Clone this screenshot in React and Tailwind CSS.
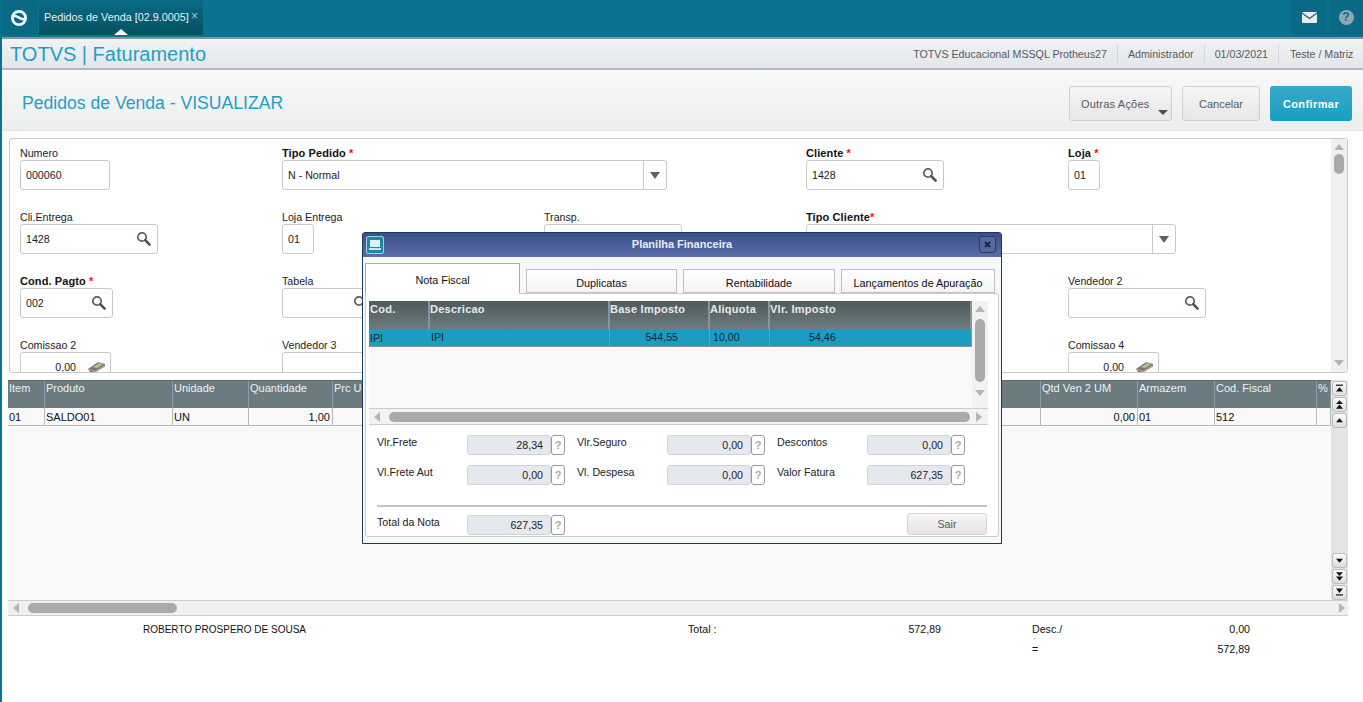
import { Fragment } from 'react'

const font = { fontFamily: '"Liberation Sans", Arial, sans-serif' }

function Lupa({ className = '' }) {
  return (
    <svg width="15" height="15" viewBox="0 0 15 15" className={className}>
      <circle cx="6" cy="6" r="4.2" fill="none" stroke="#56626a" strokeWidth="1.7" />
      <path d="M9.2 9.2L13.6 13.6" stroke="#46525a" strokeWidth="2.6" strokeLinecap="round" />
    </svg>
  )
}

function Dinheiro() {
  return (
    <svg width="19" height="13" viewBox="0 0 19 13">
      <path d="M1 9L11 2L18 4L18 6.5L8 12.5L3 12Z" fill="#86796c" />
      <path d="M6 7L12 3L16 4.3L10 8.3Z" fill="#a9c48c" />
      <path d="M2 9.5L8 11.5L18 5.5" fill="none" stroke="#b9b0a4" strokeWidth="1" />
    </svg>
  )
}

function Campo({ label, req, bold, w, icon, money, value, select, reqJunto }) {
  return (
    <div>
      <div className={`h-[14px] leading-[14px] ${bold ? 'text-[11px] tracking-[0.1px] font-bold text-[#111]' : 'text-[10.67px] text-[#222]'}`}>
        {label}
        {req && <span className="text-[#e11] font-bold">{reqJunto ? '*' : ' *'}</span>}
      </div>
      <div style={{ width: w }} className="h-[30px] bg-white border border-[#c9c9c9] rounded-[3px] flex items-center text-[10.67px] text-[#222] relative">
        <span className={`${money ? 'flex-1 text-right pr-[34px]' : 'pl-[5px]'}`}>{value}</span>
        {icon && <Lupa className="absolute right-[6px] top-[6px]" />}
        {money && <span className="absolute right-[4px] top-[7px]"><Dinheiro /></span>}
        {select && (
          <span className="absolute right-0 top-0 bottom-0 w-[23px] border-l border-[#c9c9c9] flex items-center justify-center">
            <span className="w-0 h-0 border-l-[5px] border-r-[5px] border-t-[7px] border-l-transparent border-r-transparent border-t-[#5a6268]" />
          </span>
        )}
      </div>
    </div>
  )
}

function Formulario() {
  return (
    <div className="mt-[7px] ml-[7px] mr-[15px] h-[235px] border border-[#c8c8c8] rounded-[3px] bg-white flex overflow-hidden">
      <div className="flex-1 overflow-hidden pl-[10px] pt-[7px] grid grid-cols-[262px_262px_262px_262px_1fr] auto-rows-[64px]">
        <Campo label="Numero" w={90} value="000060" />
        <div className="col-span-2"><Campo label="Tipo Pedido" req bold w={385} value="N - Normal" select /></div>
        <Campo label="Cliente" req bold w={138} value="1428" icon />
        <Campo label="Loja" req bold w={32} value="01" />

        <Campo label="Cli.Entrega" w={138} value="1428" icon />
        <Campo label="Loja Entrega" w={32} value="01" />
        <Campo label="Transp." w={138} value="" icon />
        <div className="col-span-2"><Campo label="Tipo Cliente" req reqJunto bold w={370} value="" select /></div>

        <Campo label="Cond. Pagto" req bold w={93} value="002" icon />
        <Campo label="Tabela" w={93} value="" icon />
        <div />
        <div />
        <Campo label="Vendedor 2" w={138} value="" icon />

        <Campo label="Comissao 2" w={91} value="0,00" money />
        <Campo label="Vendedor 3" w={138} value="" icon />
        <div />
        <div />
        <Campo label="Comissao 4" w={91} value="0,00" money />
      </div>
      <div className="w-[16px] bg-[#f0f0f0] flex flex-col items-center py-[3px]">
        <span className="mt-[2px] w-0 h-0 border-l-[5px] border-r-[5px] border-b-[6px] border-l-transparent border-r-transparent border-b-[#b5b5b5]" />
        <span className="mt-[4px] w-[10px] h-[20px] rounded-[5px] bg-[#aaaaaa]" />
        <span className="mt-auto mb-[3px] w-0 h-0 border-l-[5px] border-r-[5px] border-t-[6px] border-l-transparent border-r-transparent border-t-[#b5b5b5]" />
      </div>
    </div>
  )
}

const colunas = [
  { t: 'Item', w: 37, v: '01' },
  { t: 'Produto', w: 128, v: 'SALDO01' },
  { t: 'Unidade', w: 76, v: 'UN' },
  { t: 'Quantidade', w: 84, v: '1,00', dir: true },
  { t: 'Prc Unitario', w: 708, v: '' },
  { t: 'Qtd Ven 2 UM', w: 97, v: '0,00', dir: true },
  { t: 'Armazem', w: 77, v: '01' },
  { t: 'Cod. Fiscal', w: 102, v: '512' },
  { t: '%', w: 14, v: '' },
]

function BotaoSeta({ tipo }) {
  const desenhos = {
    topo: <><path d="M3.5 2h8v1.4h-8z" /><path d="M3.5 10L7.5 5L11.5 10Z" /></>,
    dupCima: <><path d="M3.5 6L7.5 1.5L11.5 6Z" /><path d="M3.5 11.5L7.5 6.5L11.5 11.5Z" /></>,
    cima: <path d="M3.5 8.5L7.5 4L11.5 8.5Z" />,
    baixo: <path d="M3.5 4.5L7.5 9L11.5 4.5Z" />,
    dupBaixo: <><path d="M3.5 1.5L7.5 6L11.5 1.5Z" /><path d="M3.5 6.5L7.5 11.5L11.5 6.5Z" /></>,
    fim: <><path d="M3.5 2L7.5 7L11.5 2Z" /><path d="M3.5 8.6h8v1.4h-8z" /></>,
  }
  return (
    <span className="w-[15px] h-[15px] bg-gradient-to-b from-[#fafafa] to-[#dddddd] border border-[#bbbbbb] rounded-[3px] flex items-center justify-center">
      <svg width="15" height="13" viewBox="0 0 15 13" fill="#111">{desenhos[tipo]}</svg>
    </span>
  )
}

function GradeItens() {
  return (
    <div className="mt-[7px] ml-[6px] mr-[15px]">
      <div className="flex h-[220px]">
        <div className="flex-1 bg-[#f9f9f9] overflow-hidden">
          <div className="flex h-[28px] bg-[#6b7b80] border-t border-[#59676c] text-[11px] leading-[14px] text-[#eef2f3]">
            {colunas.map(c => (
              <div key={c.t} style={{ width: c.w }} className="border-r border-[#8f9ca0] pl-[1px] overflow-hidden whitespace-nowrap">{c.t}</div>
            ))}
          </div>
          <div className="flex h-[18px] bg-[#f9f9f9] border-b border-[#b8b8b8] text-[11px] leading-[19px] text-[#111]">
            {colunas.map(c => (
              <div key={c.t} style={{ width: c.w }} className={`border-r border-[#b8b8b8] px-[1px] ${c.dir ? 'text-right pr-[2px]' : ''}`}>{c.v}</div>
            ))}
          </div>
        </div>
        <div className="w-[17px] bg-[#e4e4e4] flex flex-col items-center pt-[1px]">
          <BotaoSeta tipo="topo" />
          <span className="h-[1px]" />
          <BotaoSeta tipo="dupCima" />
          <span className="h-[1px]" />
          <BotaoSeta tipo="cima" />
          <span className="mt-auto" />
          <BotaoSeta tipo="baixo" />
          <span className="h-[1px]" />
          <BotaoSeta tipo="dupBaixo" />
          <span className="h-[1px]" />
          <BotaoSeta tipo="fim" />
        </div>
      </div>
      <div className="h-[16px] bg-[#f0f0f0] border-y border-[#cccccc] flex items-center relative">
        <span className="ml-[5px] w-0 h-0 border-t-[5px] border-b-[5px] border-r-[6px] border-t-transparent border-b-transparent border-r-[#b5b5b5]" />
        <span className="ml-[9px] w-[149px] h-[10px] rounded-[5px] bg-[#aaaaaa]" />
        <span className="ml-auto mr-[3px] w-0 h-0 border-t-[5px] border-b-[5px] border-l-[6px] border-t-transparent border-b-transparent border-l-[#b5b5b5]" />
      </div>
    </div>
  )
}

function Rodape() {
  return (
    <div className="mt-[6px] text-[10.67px] leading-[14px] text-[#111]">
      <div className="flex h-[20px]">
        <span className="ml-[141px] w-[545px] text-[10px] leading-[16px]">ROBERTO PROSPERO DE SOUSA</span>
        <span className="w-[200px]">Total :</span>
        <span className="w-[53px] text-right">572,89</span>
        <span className="ml-[91px] w-[60px]">
          Desc./
          <span className="block pl-[1px] text-[8px] leading-[6px]">·</span>
        </span>
        <span className="w-[158px] text-right">0,00</span>
      </div>
      <div className="flex h-[20px]">
        <span className="ml-[1030px] w-[60px]">=</span>
        <span className="w-[158px] text-right">572,89</span>
      </div>
    </div>
  )
}

const abasModal = [
  { t: 'Nota Fiscal', w: 155, ativa: true },
  { t: 'Duplicatas', w: 151 },
  { t: 'Rentabilidade', w: 152 },
  { t: 'Lançamentos de Apuração', w: 154 },
]

const colunasImposto = [
  { t: 'Cod.', w: 61, v: 'IPI', foco: true },
  { t: 'Descricao', w: 180, v: 'IPI' },
  { t: 'Base Imposto', w: 100, v: '544,55', pr: 'text-right pr-[31px]' },
  { t: 'Aliquota', w: 60, v: '10,00', pr: 'pl-[3px]' },
  { t: 'Vlr. Imposto', w: 202, v: '54,46', pr: 'pl-[39px]' },
]

function Valor({ label, valor, ultimo }) {
  return (
    <div className="flex items-start">
      <span className="w-[90px] text-[10.67px] leading-[14px] text-[#222]">{label}</span>
      <span className="w-[84px] h-[20px] bg-[#e5e8ef] border border-[#d0d2d6] rounded-[3px] text-right pr-[7px] text-[10.67px] leading-[19px] text-[#222]">{valor}</span>
      <span className="w-[14px] h-[20px] bg-white border border-[#999999] rounded-[3px] text-center text-[11px] font-bold leading-[18px] text-[#a8a8a8]">?</span>
      {!ultimo && <span className="w-[12px]" />}
    </div>
  )
}

function PlanilhaFinanceira() {
  return (
    <div className="absolute left-[362px] top-[232px] w-[640px] h-[312px] bg-[#f7f8f8] border border-[#1a3a5c] rounded-t-[3px] flex flex-col">
      <div className="h-[24px] bg-gradient-to-b from-[#3d4f88] to-[#5b6ea8] flex items-center relative">
        <span className="ml-[3px] w-[18px] h-[18px] bg-[#1b8aa6] border border-[#a8d0dc] rounded-[2px] flex items-center justify-center">
          <svg width="12" height="12" viewBox="0 0 12 12">
            <rect x="1" y="1" width="10" height="7" fill="#dff1f6" />
            <rect x="0" y="9" width="12" height="2" fill="#cfe6ee" />
          </svg>
        </span>
        <span className="flex-1 text-center text-[11px] font-bold text-[#e9ecf5] pr-[21px] pb-[2px]">Planilha Financeira</span>
        <span className="absolute right-[5px] top-[3px] w-[17px] h-[17px] border border-[#2c3a66] rounded-[3px] bg-[#56699f] flex items-center justify-center">
          <svg width="9" height="9" viewBox="0 0 9 9"><path d="M2 2L7 7M7 2L2 7" stroke="#1a2238" strokeWidth="1.8" /></svg>
        </span>
      </div>

      <div className="flex items-end h-[36px] ml-[2px] gap-[6px] relative z-10">
        {abasModal.map(a => (
          <div
            key={a.t}
            style={{ width: a.w }}
            className={`border bg-gradient-to-b text-center text-[10.85px] text-[#111] ${a.ativa ? 'h-[31px] from-white to-white border-[#aaaaaa] border-b-white leading-[32px] -mb-[1px]' : 'h-[24px] border-[#c0c0c0] from-white to-[#f3f3f3] leading-[27px]'}`}
          >
            {a.t}
          </div>
        ))}
      </div>

      <div className="mx-[2px] mb-[6px] flex-1 bg-white border border-[#cccccc] rounded-b-[3px] rounded-tr-[3px] px-[3px] pt-[7px] flex flex-col">
        <div className="flex h-[107px]">
          <div className="w-[603px] bg-[#f9f9f9]">
            <div className="flex h-[29px] bg-gradient-to-b from-[#4f5a5c] to-[#6d7d81] text-[11px] font-bold leading-[14px] text-[#e6eaeb] tracking-[0.25px]">
              {colunasImposto.map(c => (
                <div key={c.t} style={{ width: c.w }} className={`border-r-2 border-[#8a9497] pt-[1px] ${c.foco ? 'pl-[1px]' : ''}`}>{c.t}</div>
              ))}
            </div>
            <div className="flex h-[17px] bg-[#1b9cc0] border-b border-[#8a9497] text-[10.67px] leading-[15px] text-[#0e2a33]">
              {colunasImposto.map(c => (
                <div key={c.t} style={{ width: c.w }} className={`border-r border-[#8a9497] ${c.foco ? 'border border-dotted border-[#d2603f]' : ''} ${c.pr || (c.foco ? '' : 'pl-[1px]')}`}>{c.v}</div>
              ))}
            </div>
          </div>
          <div className="w-[16px] bg-[#f2f2f2] flex flex-col items-center pt-[5px]">
            <span className="w-0 h-0 border-l-[5px] border-r-[5px] border-b-[6px] border-l-transparent border-r-transparent border-b-[#b5b5b5]" />
            <span className="mt-[7px] w-[10px] h-[63px] rounded-[5px] bg-[#aaaaaa]" />
            <span className="mt-[8px] w-0 h-0 border-l-[5px] border-r-[5px] border-t-[6px] border-l-transparent border-r-transparent border-t-[#b5b5b5]" />
          </div>
        </div>
        <div className="h-[17px] w-[619px] bg-[#f2f2f2] border-y border-[#cccccc] flex items-center">
          <span className="ml-[5px] w-0 h-0 border-t-[5px] border-b-[5px] border-r-[6px] border-t-transparent border-b-transparent border-r-[#b5b5b5]" />
          <span className="ml-[9px] w-[581px] h-[10px] rounded-[5px] bg-[#aaaaaa]" />
          <span className="ml-[6px] w-0 h-0 border-t-[5px] border-b-[5px] border-l-[6px] border-t-transparent border-b-transparent border-l-[#b5b5b5]" />
        </div>

        <div className="ml-[8px] mt-[10px] grid grid-cols-[200px_200px_188px] gap-y-[10px]">
          <Valor label="Vlr.Frete" valor="28,34" />
          <Valor label="Vlr.Seguro" valor="0,00" />
          <Valor label="Descontos" valor="0,00" ultimo />
          <Valor label="Vl.Frete Aut" valor="0,00" />
          <Valor label="Vl. Despesa" valor="0,00" />
          <Valor label="Valor Fatura" valor="627,35" ultimo />
        </div>

        <div className="ml-[8px] mr-[8px] mt-[20px] h-[2px] bg-[#c4c4c4]" />

        <div className="ml-[8px] mr-[8px] mt-[6px] flex items-start justify-between">
          <div className="pt-[2px]"><Valor label="Total da Nota" valor="627,35" ultimo /></div>
          <span className="w-[80px] h-[22px] bg-gradient-to-b from-[#f6f6f6] to-[#e4e4e4] border border-[#d4d4d4] rounded-[3px] text-center text-[10.67px] leading-[21px] text-[#555]">Sair</span>
        </div>
      </div>
    </div>
  )
}

export default function App() {
  return (
    <div style={font} className="relative w-[1363px] h-[702px] overflow-hidden bg-[#0b7290] pl-[2px]">
      {/* barra superior */}
      <div className="-ml-[2px] h-[37px] bg-[#0b7290] flex pl-[1px] pb-[2px]">
        <div className="w-[37px] bg-[#0a6985] flex items-center justify-center pr-[1px]">
          <svg width="18" height="18" viewBox="0 0 18 18">
            <circle cx="9" cy="9" r="6.6" fill="none" stroke="#f2f6f7" strokeWidth="2.8" />
            <path d="M3.5 7.5C6.5 4.8 10 11.5 14.5 10" fill="none" stroke="#f2f6f7" strokeWidth="2.6" />
          </svg>
        </div>
        <div className="ml-[1px] w-[164px] bg-gradient-to-b from-[#0b6b87] to-[#05525f] text-[#e6f0f3] text-[10.8px] leading-[35px] pl-[5px] relative">
          Pedidos de Venda [02.9.0005]
          <span className="absolute right-[5px] top-0 text-[#a9c2cb] text-[12px] leading-[32px]">×</span>
          <span className="absolute left-[75px] bottom-0 w-0 h-0 border-l-[7px] border-r-[7px] border-b-[6px] border-l-transparent border-r-transparent border-b-white" />
        </div>
        <div className="ml-auto w-[36px] bg-[#0a6985] flex items-center justify-center">
          <svg width="15" height="11" viewBox="0 0 15 11">
            <rect width="15" height="11" rx="1" fill="#e6eef1" />
            <path d="M0 1L7.5 6.5L15 1" fill="none" stroke="#0a6985" strokeWidth="1.2" />
          </svg>
        </div>
        <div className="ml-[2px] w-[34px] bg-[#0a6985] flex items-center justify-center">
          <span className="w-[15px] h-[15px] rounded-full bg-[#8fa9b3] text-[#0a6985] text-[12px] font-bold text-center leading-[15px]">?</span>
        </div>
      </div>

      <div className="h-[665px] bg-white">
        {/* modulo */}
        <div className="h-[33px] bg-gradient-to-b from-[#f0f2f4] to-[#e3e6ea] border-y-2 border-t-[#909396] border-b-[#b5b7ba] flex items-center justify-between pl-[8px]">
          <span className="text-[20px] text-[#1f9fc4]">TOTVS | Faturamento</span>
          <div className="flex items-center text-[10.67px] text-[#555b60]">
            <span className="pr-[10px] border-r border-[#d4d6d9] leading-[18px]">TOTVS Educacional MSSQL Protheus27</span>
            <span className="px-[10px] border-r border-[#d4d6d9] leading-[18px]">Administrador</span>
            <span className="px-[10px] border-r border-[#d4d6d9] leading-[18px]">01/03/2021</span>
            <span className="pl-[11px] w-[84px] leading-[18px] whitespace-nowrap">Teste / Matriz</span>
          </div>
        </div>

        {/* titulo e acoes */}
        <div className="h-[61px] pt-[6px] bg-gradient-to-b from-[#f8f9f8] to-[#eceeef] border-b border-[#e0e2e3] flex items-center justify-between pl-[20px] pr-[11px]">
          <span className="text-[17.6px] text-[#1f9fc4]">Pedidos de Venda - VISUALIZAR</span>
          <div className="flex gap-[10px] text-[11px]">
            <span className="relative w-[103px] h-[35px] bg-gradient-to-b from-[#f5f5f5] to-[#e7e7e7] border border-[#d0d0d0] rounded-[3px] text-[#555b60] leading-[34px] pl-[11px] tracking-[0.2px]">
              Outras Ações
              <span className="absolute right-[3px] bottom-[5px] w-0 h-0 border-l-[5px] border-r-[5px] border-t-[5px] border-l-transparent border-r-transparent border-t-[#4a4f55]" />
            </span>
            <span className="w-[78px] h-[35px] bg-gradient-to-b from-[#f5f5f5] to-[#e7e7e7] border border-[#d0d0d0] rounded-[3px] text-center text-[#555b60] leading-[34px]">Cancelar</span>
            <span className="w-[82px] h-[35px] bg-gradient-to-b from-[#36a9c8] to-[#13a0c2] rounded-[3px] text-center text-white font-bold tracking-[0.4px] leading-[36px]">Confirmar</span>
          </div>
        </div>

        <Formulario />
        <GradeItens />
        <Rodape />
      </div>

      <PlanilhaFinanceira />
    </div>
  )
}
